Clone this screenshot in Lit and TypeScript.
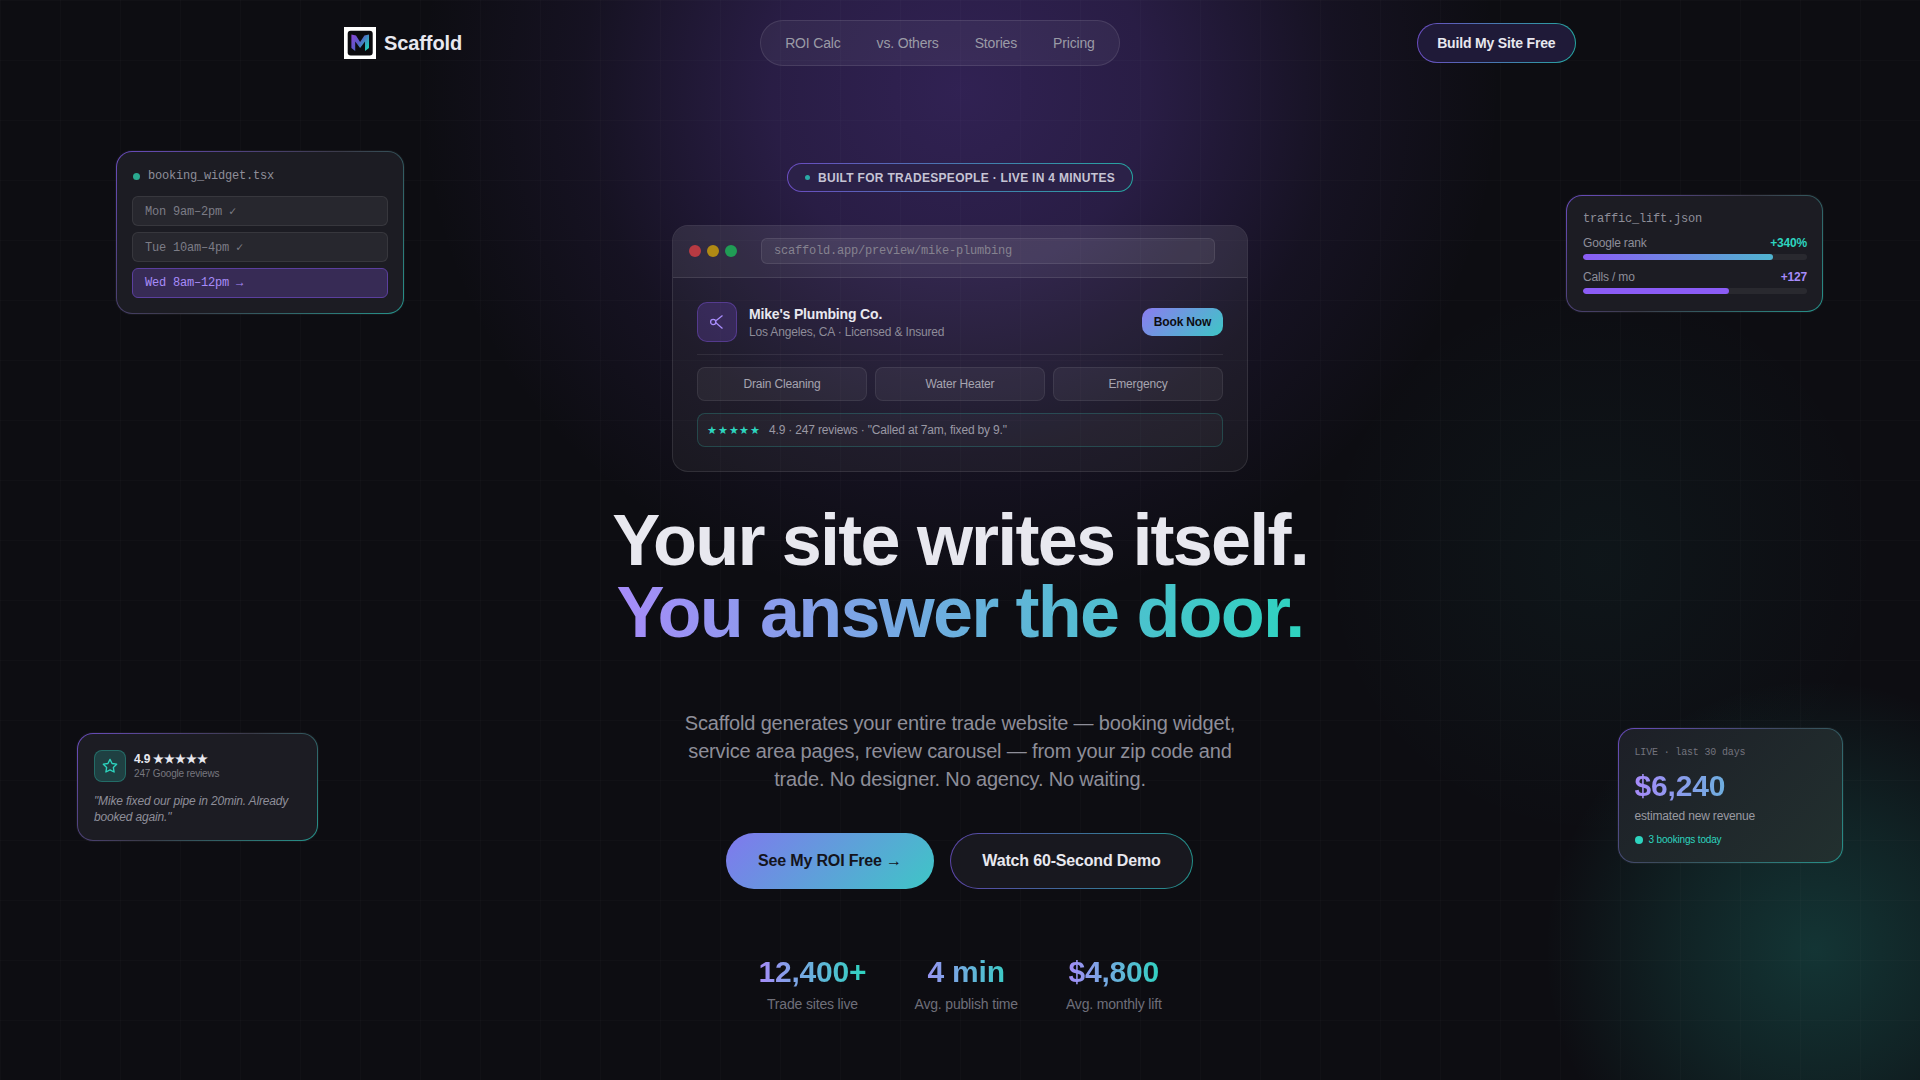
import { LitElement, html, css } from "lit";
import { customElement } from "lit/decorators.js";

const sans = css`"Liberation Sans", Arial, sans-serif`;
const mono = css`"Liberation Mono", "Courier New", monospace`;

@customElement("app-root")
export class AppRoot extends LitElement {
  static styles = css`
    :host { display: block; }
    * { box-sizing: border-box; }
    .page {
      position: relative; width: 100%; height: 1080px; overflow: hidden;
      background-color: #0d0d12; color: #e8e8ef; font-family: ${sans}; letter-spacing: -.17px;
    }
    .glow { position: absolute; inset: 0; pointer-events: none;
      background:
        radial-gradient(ellipse 540px 520px at 960px 90px, rgba(124,77,220,.32) 0%, rgba(124,77,220,.25) 35%, rgba(124,77,220,.08) 70%, rgba(124,77,220,0) 100%),
        radial-gradient(circle 270px at 1815px 950px, rgba(45,212,191,.2) 0%, rgba(45,212,191,.11) 50%, rgba(45,212,191,0) 100%),
        radial-gradient(circle 280px at 1600px 560px, rgba(45,212,191,.045) 0%, rgba(45,212,191,0) 100%);
    }
    .grid { position: absolute; inset: 0; pointer-events: none;
      background-image:
        linear-gradient(rgba(255,255,255,.014) 1px, transparent 1px),
        linear-gradient(90deg, rgba(255,255,255,.014) 1px, transparent 1px);
      background-size: 60px 60px;
    }
    .content { position: relative; display: flex; flex-direction: column; align-items: center; }
    nav {
      width: 1232px; height: 85px; padding-top: 20px; align-self: center;
      display: flex; justify-content: space-between; align-items: flex-start;
    }
    .brand { display: flex; align-items: center; gap: 8px; height: 45px; font-size: 20px; font-weight: 700; letter-spacing: -.1px; }
    .brand span { padding-top: 1px; }
    .logo { width: 32px; height: 32px; display: block; }
    .links {
      height: 46px; margin-left: 1px; display: flex; align-items: center; gap: 4px; padding: 0 8px;
      border-radius: 24px; background: rgba(255,255,255,.05); border: 1px solid rgba(255,255,255,.1);
    }
    .links a { padding: 8px 16px; font-size: 14px; color: #9b9ba6; }
    .build {
      margin-top: 3px; height: 40px; padding: 0 19.5px; display: flex; align-items: center;
      font-size: 14px; font-weight: 700; border-radius: 20px; border: 1px solid transparent;
      background: linear-gradient(#1f1a38,#1f1a38) padding-box, linear-gradient(90deg,#6a4cc0,#25a5a0) border-box;
    }
    .badge {
      margin-top: 78px; height: 29px; padding: 0 17px; display: flex; align-items: center; gap: 8px;
      font-size: 12px; font-weight: 700; letter-spacing: .3px; color: #c6c4d4; border-radius: 15px;
      border: 1.5px solid transparent;
      background: linear-gradient(#2b2148,#2b2148) padding-box, linear-gradient(90deg,#6a4cc0,#25a5a0) border-box;
    }
    .badge i { width: 5px; height: 5px; border-radius: 50%; background: #2aa9a6; }
    .browser {
      margin-top: 33px; width: 576px; border-radius: 16px; overflow: hidden;
      background: linear-gradient(rgba(255,255,255,.045),rgba(255,255,255,.045));
      border: 1px solid rgba(255,255,255,.1);
    }
    .bar { height: 52px; display: flex; align-items: center; padding: 0 16px 1px; gap: 6px;
      background: rgba(255,255,255,.05); border-bottom: 1px solid rgba(255,255,255,.1); }
    .dot { width: 12px; height: 12px; border-radius: 50%; }
    .dot.r { background: #b83a42; } .dot.y { background: #b08a14; } .dot.g { background: #209c55; }
    .url { margin-left: 18px; width: 454px; height: 26px; display: flex; align-items: center; padding: 0 12px;
      font-family: ${mono}; font-size: 12px; letter-spacing: -.2px; color: #85828f; border-radius: 6px;
      background: rgba(255,255,255,.06); border: 1px solid rgba(255,255,255,.09); }
    .body { padding: 24px; }
    .biz { display: flex; align-items: center; gap: 12px; padding-bottom: 12px; border-bottom: 1px solid rgba(255,255,255,.08); margin-bottom: 12px; }
    .bizicon { width: 40px; height: 40px; border-radius: 10px; display: flex; align-items: center; justify-content: center;
      background: rgba(139,92,246,.2); border: 1px solid rgba(139,92,246,.35); color: #a78bfa; }
    .bizname { flex: 1; }
    .bizname b { display: block; font-size: 14px; line-height: 20px; }
    .bizname span { display: block; font-size: 12px; line-height: 16px; color: #8e8c99; }
    .book { width: 81px; height: 28px; display: flex; align-items: center; justify-content: center; border-radius: 10px;
      font-size: 12px; font-weight: 700; color: #0d0d12; background: linear-gradient(135deg,#8b7cf0,#3ec6c6); }
    .chips { display: grid; grid-template-columns: repeat(3,1fr); gap: 8px; }
    .chip { height: 34px; display: flex; align-items: center; justify-content: center; font-size: 12px; color: #a6a4b0;
      border-radius: 8px; background: rgba(255,255,255,.05); border: 1px solid rgba(255,255,255,.08); }
    .rev { margin-top: 12px; height: 34px; display: flex; align-items: center; gap: 8px; padding: 0 9px; font-size: 12px; color: #9a98a4;
      border-radius: 8px; background: rgba(255,255,255,.03); border: 1px solid rgba(45,212,191,.22); }
    .rev em { font-style: normal; color: #2dd4bf; font-size: 11px; letter-spacing: .8px; }
    h1 { margin: 32px 0 0; text-align: center; font-size: 72px; line-height: 72px; font-weight: 700; letter-spacing: -1.8px; }
    .grad { background: linear-gradient(90deg,#a78bfa,#2dd4bf); -webkit-background-clip: text; background-clip: text; color: transparent; }
    h1 span { display: block; }
    .sub { margin: 61px 0 0; width: 576px; text-align: center; font-size: 20px; line-height: 28px; color: #8e8e99; }
    .cta { margin: 40px 1px 0 0; display: flex; gap: 16px; }
    .cta a { height: 56px; display: flex; align-items: center; justify-content: center; border-radius: 28px; font-size: 16px; font-weight: 700; }
    .primary { width: 208px; color: #14141c; background: linear-gradient(135deg,#8078ee,#3ec6c6); }
    .ghost { width: 243px; border: 1.5px solid transparent;
      background: linear-gradient(#18181f,#18181f) padding-box, linear-gradient(90deg,#5b45a8,#23908a) border-box; }
    .stats { margin-top: 65px; display: flex; gap: 48px; text-align: center; }
    .stats b { display: block; font-size: 30px; line-height: 36px; }
    .stats span { display: block; margin-top: 4px; font-size: 14px; line-height: 20px; color: #6f6f7a; }
    .card { position: absolute; border-radius: 16px; padding: 16px; border: 1.5px solid transparent;
      background: linear-gradient(#1c1c23,#1c1c23) padding-box, linear-gradient(135deg,#6a4cc0,#3a3a48 50%,#25948c) border-box;
      box-shadow: 0 0 0 1px rgba(255,255,255,.04); }
    .booking { left: 116px; top: 151px; width: 288px; height: 163px; padding: 17px 15px 0; }
    .booking .fname { margin-left: 1px; }
    .fname { font-family: ${mono}; font-size: 12px; letter-spacing: -.2px; color: #8e8e99; display: flex; align-items: center; gap: 8px; }
    .fname i { width: 7px; height: 7px; border-radius: 50%; background: #2aa98f; }
    .slots { margin-top: 13px; display: flex; flex-direction: column; gap: 6px; }
    .slot { height: 30px; display: flex; align-items: center; padding: 0 12px; border-radius: 6px; font-family: ${mono}; font-size: 12px; letter-spacing: -.2px; color: #7c7c86;
      background: rgba(255,255,255,.05); border: 1px solid rgba(255,255,255,.08); }
    .slot.on { color: #a78bfa; background: #372b55; border-color: #5b3f9e; }
    .traffic { right: 97px; top: 195px; width: 257px; height: 117px; padding-right: 15px; }
    .kv { display: flex; justify-content: space-between; font-size: 12px; line-height: 14px; color: #8e8e99; margin-top: 10px; }
    .kv b { color: #2dd4bf; } .kv b.p { color: #a78bfa; }
    .track { margin-top: 4px; height: 6px; border-radius: 3px; background: rgba(255,255,255,.06); overflow: hidden; }
    .fill { height: 100%; border-radius: 3px; background: #8b5cf6; }
    .fill.g { background: linear-gradient(90deg,#8b5cf6,#4fb4cf); }
    .review { left: 77px; top: 733px; width: 241px; height: 108px; }
    .rtop { display: flex; align-items: center; gap: 8px; }
    .ricon { width: 32px; height: 32px; border-radius: 8px; display: flex; align-items: center; justify-content: center;
      background: rgba(45,212,191,.2); border: 1px solid rgba(45,212,191,.3); color: #2dd4bf; }
    .rtop b { display: block; font-size: 12px; line-height: 16px; }
    .rtop span { display: block; font-size: 10px; line-height: 14px; color: #77777f; }
    .quote { margin: 11px 0 0; font-size: 12px; line-height: 16px; font-style: italic; color: #8e8e99; }
    .rev-card { left: 1618px; top: 728px; width: 225px; height: 135px; border-radius: 16px; padding-left: 15.5px;
      background: linear-gradient(135deg,#1d1f27,#22302f) padding-box, linear-gradient(135deg,#6a4cc0,#3a4a58 50%,#25948c) border-box; }
    .live { font-family: ${mono}; font-size: 10px; line-height: 14px; color: #73737d; padding-top: 1px; }
    .money { margin-top: 8px; font-size: 30px; line-height: 36px; font-weight: 700; }
    .est { margin-top: 4px; font-size: 12px; line-height: 16px; color: #9a9aa2; }
    .today { margin-top: 9px; display: flex; align-items: center; gap: 6px; font-size: 10px; line-height: 14px; color: #2dd4bf; }
    .today i { width: 8px; height: 8px; border-radius: 50%; background: #2dd4bf; }
  `;

  render() {
    return html`
      <div class="page">
        <div class="glow"></div>
        <div class="grid"></div>
        <div class="content">
          <nav>
            <div class="brand">
              <svg class="logo" viewBox="0 0 32 32">
                <defs>
                  <linearGradient id="lg" x1="0" y1="0" x2="1" y2="0.6">
                    <stop offset="0" stop-color="#8b45d6"/><stop offset=".5" stop-color="#5a5ac8"/><stop offset="1" stop-color="#25c4b8"/>
                  </linearGradient>
                </defs>
                <rect width="32" height="32" fill="#fff"/>
                <rect x="3.7" y="3.7" width="25" height="24.8" rx="3" fill="#0b0b0f"/>
                <path d="M7.4 7.5l4.6 1 4.1 6.5 4.3-6.5 4.6-1v13.5l-4 3v-9.5l-4.9 6.5-4.9-6.5v9.5l-3.8-3z" fill="url(#lg)"/>
              </svg>
              <span>Scaffold</span>
            </div>
            <div class="links"><a>ROI Calc</a><a>vs. Others</a><a>Stories</a><a>Pricing</a></div>
            <a class="build">Build My Site Free</a>
          </nav>
          <div class="badge"><i></i>BUILT FOR TRADESPEOPLE · LIVE IN 4 MINUTES</div>
          <div class="browser">
            <div class="bar">
              <span class="dot r"></span>
              <span class="dot y"></span>
              <span class="dot g"></span>
              <div class="url">scaffold.app/preview/mike-plumbing</div>
            </div>
            <div class="body">
              <div class="biz">
                <div class="bizicon">
                  <svg width="18" height="18" viewBox="0 0 18 18" fill="none" stroke="currentColor" stroke-width="1.3"><circle cx="5.2" cy="9" r="2.6"/><path d="M7.6 8L14.5 2.5M7.6 9.5L14.5 15.5"/></svg>
                </div>
                <div class="bizname"><b>Mike's Plumbing Co.</b><span>Los Angeles, CA · Licensed &amp; Insured</span></div>
                <a class="book">Book Now</a>
              </div>
              <div class="chips"><div class="chip">Drain Cleaning</div><div class="chip">Water Heater</div><div class="chip">Emergency</div></div>
              <div class="rev"><em>★★★★★</em>4.9 · 247 reviews · "Called at 7am, fixed by 9."</div>
            </div>
          </div>
          <h1>Your site writes itself.<span class="grad">You answer the door.</span></h1>
          <p class="sub">Scaffold generates your entire trade website — booking widget, service area pages, review carousel — from your zip code and trade. No designer. No agency. No waiting.</p>
          <div class="cta"><a class="primary">See My ROI Free →</a><a class="ghost">Watch 60-Second Demo</a></div>
          <div class="stats">
            <div><b class="grad">12,400+</b><span>Trade sites live</span></div>
            <div><b class="grad">4 min</b><span>Avg. publish time</span></div>
            <div><b class="grad">$4,800</b><span>Avg. monthly lift</span></div>
          </div>
        </div>
        <div class="card booking">
          <div class="fname"><i></i>booking_widget.tsx</div>
          <div class="slots">
            <div class="slot">Mon 9am–2pm ✓</div>
            <div class="slot">Tue 10am–4pm ✓</div>
            <div class="slot on">Wed 8am–12pm →</div>
          </div>
        </div>
        <div class="card traffic">
          <div class="fname">traffic_lift.json</div>
          <div class="kv"><span>Google rank</span><b>+340%</b></div>
          <div class="track"><div class="fill g" style="width:85%"></div></div>
          <div class="kv"><span>Calls / mo</span><b class="p">+127</b></div>
          <div class="track"><div class="fill" style="width:65%"></div></div>
        </div>
        <div class="card review">
          <div class="rtop">
            <div class="ricon"><svg width="16" height="16" viewBox="0 0 24 24" fill="none" stroke="currentColor" stroke-width="2" stroke-linejoin="round"><path d="M12 2l3.09 6.26L22 9.27l-5 4.87 1.18 6.88L12 17.77l-6.18 3.25L7 14.14 2 9.27l6.91-1.01z"/></svg></div>
            <div><b>4.9 ★★★★★</b><span>247 Google reviews</span></div>
          </div>
          <p class="quote">"Mike fixed our pipe in 20min. Already booked again."</p>
        </div>
        <div class="card rev-card">
          <div class="live">LIVE · last 30 days</div>
          <div class="money grad">$6,240</div>
          <div class="est">estimated new revenue</div>
          <div class="today"><i></i>3 bookings today</div>
        </div>
      </div>
    `;
  }
}
